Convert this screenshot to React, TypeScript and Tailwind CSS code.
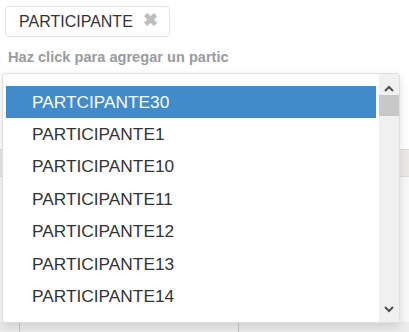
import React from 'react';

// Participant picker: selected tag, placeholder input and an open option list

const options = [
  'PARTCIPANTE30',
  'PARTICIPANTE1',
  'PARTICIPANTE10',
  'PARTICIPANTE11',
  'PARTICIPANTE12',
  'PARTICIPANTE13',
  'PARTICIPANTE14',
];

const Chevron: React.FC<{ up?: boolean }> = ({ up }) => (
  <svg width="10" height="7" viewBox="0 0 10 7" className="text-[#505050]">
    <path
      d={up ? 'M1 6 L5 2 L9 6' : 'M1 1 L5 5 L9 1'}
      fill="none"
      stroke="currentColor"
      strokeWidth="2"
    />
  </svg>
);

const App: React.FC = () => {
  return (
    <div
      className="relative w-[409px] h-[332px] overflow-hidden bg-white"
      style={{ fontFamily: '"Liberation Sans", Arial, sans-serif' }}
    >
      {/* Selected tag */}
      <div className="pt-[6px] pl-[5px]">
        <div className="flex items-center h-[31px] w-[165px] border border-[#e3e3e3] rounded-[4px] pl-[13px]">
          <span className="text-[16px] text-[#333] leading-none">PARTICIPANTE</span>
          <span className="ml-[10px] text-[18px] font-bold text-[#bdbdbd] leading-none -mt-[4px]">✖</span>
        </div>
      </div>

      <div className="mt-[11px] ml-[8px] whitespace-nowrap text-[14.6px] font-bold text-[#999ba0] leading-[18px]">
        Haz click para agregar un partic
      </div>

      {/* Table behind the list */}
      <div className="mt-[83px] w-full">
        <div className="h-[28px] bg-[#ece8e8] border-t border-b border-[#dcdcdc]" />
        <div className="h-[145px] bg-[#f8f8f8]" />
        <div className="flex h-[20px] bg-[#ececec]">
          <div className="w-[20px] border-r border-[#c5c5c5]" />
          <div className="w-[219px] border-r border-[#c5c5c5]" />
        </div>
      </div>

      {/* Open option list */}
      <div className="absolute left-[2px] top-[73px] w-[398px] h-[250px] flex bg-white border border-[#dedede] rounded-[3px] shadow-[0_4px_10px_rgba(0,0,0,0.12)]">
        <div className="flex-1 pt-[12px] pl-[3px] pr-[3px]">
          {options.map((o, i) => (
            <div
              key={o}
              className={`h-[32.4px] flex items-center pl-[26px] text-[17.3px] leading-none ${
                i === 0 ? 'bg-[#428bca] text-white' : 'text-[#333]'
              }`}
            >
              {o}
            </div>
          ))}
        </div>
        <div className="w-[20px] bg-[#f0f0f0] flex flex-col items-center">
          <div className="h-[21px] flex items-end justify-center pb-[3px]">
            <Chevron up />
          </div>
          <div className="w-full h-[21px] bg-[#c8c8c8]" />
          <div className="flex-1" />
          <div className="h-[20px] flex items-start justify-center pt-[4px]">
            <Chevron />
          </div>
        </div>
      </div>
    </div>
  );
};

export default App;
